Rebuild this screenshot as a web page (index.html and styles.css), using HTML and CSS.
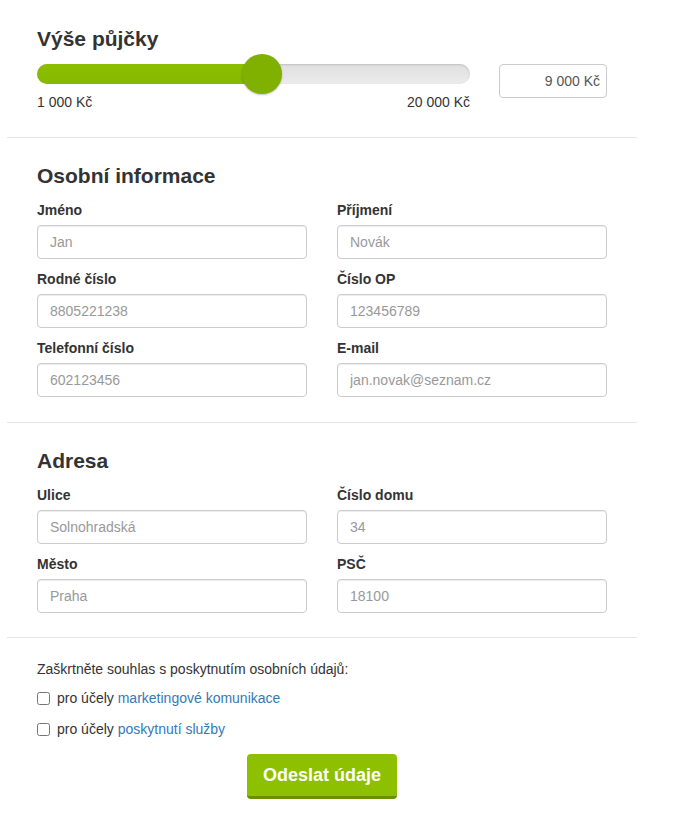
FILE: index.html
```html
<!DOCTYPE html>
<html lang="cs">
<head>
    <meta charset="UTF-8">
    <title>Žádost o půjčku</title>
    <link rel="stylesheet" href="styles.css">
</head>
<body>

<form class="loan-form">
    <div class="section section-amount">
        <h3 class="section-title">Výše půjčky</h3>
        <div class="amount-row">
            <div class="slider">
                <div class="track">
                    <div class="fill" style="width: 52%;"></div>
                    <span class="handle" style="left: 52%;"></span>
                </div>
                <div class="range">
                    <span>1 000 Kč</span>
                    <span>20 000 Kč</span>
                </div>
            </div>
            <input class="amount-value" type="text" value="9 000 Kč">
        </div>
    </div>

    <div class="section">
        <h3 class="section-title">Osobní informace</h3>
        <div class="fields">
            <label class="field">
                <span class="field-label">Jméno</span>
                <input type="text" placeholder="Jan">
            </label>
            <label class="field">
                <span class="field-label">Příjmení</span>
                <input type="text" placeholder="Novák">
            </label>
            <label class="field">
                <span class="field-label">Rodné číslo</span>
                <input type="text" placeholder="8805221238">
            </label>
            <label class="field">
                <span class="field-label">Číslo OP</span>
                <input type="text" placeholder="123456789">
            </label>
            <label class="field">
                <span class="field-label">Telefonní číslo</span>
                <input type="text" placeholder="602123456">
            </label>
            <label class="field">
                <span class="field-label">E-mail</span>
                <input type="text" placeholder="jan.novak@seznam.cz">
            </label>
        </div>
    </div>

    <div class="section section-address">
        <h3 class="section-title">Adresa</h3>
        <div class="fields">
            <label class="field">
                <span class="field-label">Ulice</span>
                <input type="text" placeholder="Solnohradská">
            </label>
            <label class="field">
                <span class="field-label">Číslo domu</span>
                <input type="text" placeholder="34">
            </label>
            <label class="field">
                <span class="field-label">Město</span>
                <input type="text" placeholder="Praha">
            </label>
            <label class="field">
                <span class="field-label">PSČ</span>
                <input type="text" placeholder="18100">
            </label>
        </div>
    </div>

    <div class="consent">
        <p class="consent-intro">Zaškrtněte souhlas s poskytnutím osobních údajů:</p>
        <label class="check">
            <input type="checkbox">
            <span>pro účely <a href="#">marketingové komunikace</a></span>
        </label>
        <label class="check">
            <input type="checkbox">
            <span>pro účely <a href="#">poskytnutí služby</a></span>
        </label>
        <div class="actions">
            <button class="submit" type="submit">Odeslat údaje</button>
        </div>
    </div>
</form>

</body>
</html>
```

FILE: styles.css
```css
body {
    margin: 0;
    padding: 8px 0 0 7px;
    font-family: "Liberation Sans", Arial, sans-serif;
    font-size: 14px;
    line-height: 20px;
    color: #333;
    background: #fff;
}

a {
    color: #337ab7;
    text-decoration: none;
}

.loan-form {
    width: 630px;
}

.section {
    padding: 26px 30px 25px;
    border-bottom: 1px solid #e5e5e5;
}

.section-amount {
    padding-top: 19px;
}

.section-address {
    padding-bottom: 24px;
}

.section-title {
    margin: 0;
    font-size: 21px;
    line-height: 23px;
    font-weight: bold;
    color: #333;
}

/* slider */

.amount-row {
    display: flex;
    align-items: flex-start;
    gap: 29px;
    margin-top: 14px;
}

.slider {
    flex: 1;
}

.track {
    position: relative;
    height: 20px;
    border-radius: 10px;
    background: linear-gradient(#e0e0e0, #ebebeb);
    box-shadow: inset 0 1px 2px rgba(0, 0, 0, .15);
}

.track > .fill {
    height: 20px;
    border-radius: 10px 0 0 10px;
    background: linear-gradient(#8cbf00, #86b800);
}

.track > .handle {
    position: absolute;
    top: -10px;
    width: 40px;
    height: 40px;
    margin-left: -20px;
    border-radius: 50%;
    background: #80b000;
    box-shadow: 0 1px 2px rgba(0, 0, 0, .25);
}

.range {
    display: flex;
    justify-content: space-between;
    margin-top: 8px;
}

.amount-value {
    width: 108px;
    height: 34px;
    box-sizing: border-box;
    padding: 0 6px;
    border: 1px solid #ccc;
    border-radius: 4px;
    font-family: inherit;
    font-size: 14px;
    color: #555;
    text-align: right;
}

/* fields */

.fields {
    display: grid;
    grid-template-columns: 1fr 1fr;
    column-gap: 30px;
    row-gap: 10px;
    margin-top: 13px;
}

.field {
    display: flex;
    flex-direction: column;
}

.field-label {
    font-weight: bold;
    margin-bottom: 5px;
}

.field > input {
    height: 34px;
    box-sizing: border-box;
    padding: 0 12px;
    border: 1px solid #ccc;
    border-radius: 4px;
    box-shadow: inset 0 1px 1px rgba(0, 0, 0, .075);
    font-family: inherit;
    font-size: 14px;
    color: #555;
}

.field > input::placeholder {
    color: #999;
}

/* consent */

.consent {
    padding: 21px 30px 0;
}

.consent-intro {
    margin: 0 0 9px;
}

.check {
    display: flex;
    align-items: center;
    height: 20px;
    margin-bottom: 11px;
}

.check > input {
    width: 13px;
    height: 13px;
    margin: 0 7px 0 0;
}

.actions {
    display: flex;
    justify-content: center;
    margin-top: 15px;
}

.submit {
    height: 45px;
    padding: 0 16px;
    border: none;
    border-bottom: 3px solid #6a9000;
    border-radius: 4px;
    background: #8dc000;
    color: #fff;
    font-family: inherit;
    font-size: 18px;
    font-weight: bold;
    cursor: pointer;
}
```
